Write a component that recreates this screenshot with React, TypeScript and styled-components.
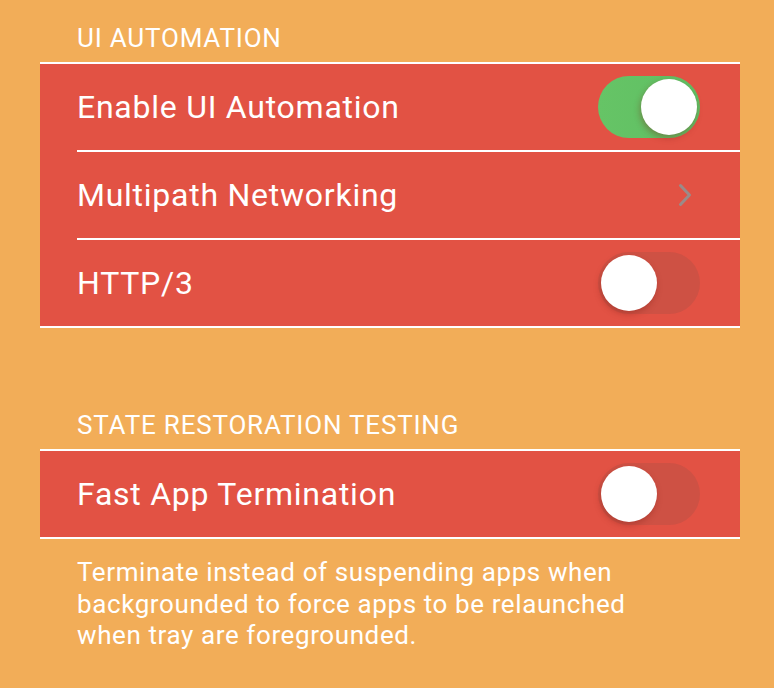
import React from "react";
import styled, { createGlobalStyle } from "styled-components";

const Global = createGlobalStyle`
  html, body { margin: 0; padding: 0; background: #f2ad58; }
  body { font-family: Roboto, "Liberation Sans", sans-serif; -webkit-font-smoothing: antialiased; }
`;

const Page = styled.div`
  width: 774px;
  height: 688px;
  background: #f2ad58;
  box-sizing: border-box;
  padding: 0 34px 0 40px;
  overflow: hidden;
`;

const SectionHeader = styled.div<{ $top: number }>`
  margin-top: ${(p) => p.$top}px;
  padding: 0 0 10px 37px;
  font-size: 26px;
  line-height: 28px;
  color: #fff;
  letter-spacing: 0.8px;
`;

const Group = styled.div`
  background: #e25244;
  border-top: 2px solid #fff;
  border-bottom: 2px solid #fff;
`;

const Row = styled.div`
  padding-left: 37px;
`;

const RowInner = styled.div<{ $last: boolean }>`
  height: 86px;
  display: flex;
  align-items: center;
  justify-content: space-between;
  padding-right: 40px;
  border-bottom: ${(p) => (p.$last ? "none" : "2px solid #fff")};
`;

const Label = styled.span`
  font-size: 32px;
  color: #fff;
  letter-spacing: 0.75px;
`;

const Track = styled.div<{ $on: boolean }>`
  position: relative;
  width: 102px;
  height: 62px;
  border-radius: 31px;
  background: ${(p) => (p.$on ? "linear-gradient(90deg, #66c466, #5fbf63)" : "rgba(190, 80, 70, 0.55)")};
  flex: none;
`;

const Knob = styled.div<{ $on: boolean }>`
  position: absolute;
  top: 3px;
  left: ${(p) => (p.$on ? "43px" : "3px")};
  width: 56px;
  height: 56px;
  border-radius: 50%;
  background: #fff;
  box-shadow: -1px 3px 6px rgba(120, 30, 20, 0.35);
`;

const Chevron = styled.svg`
  width: 14px;
  height: 24px;
  margin-right: 8px;
  flex: none;
`;

const Footer = styled.div`
  margin-top: 18px;
  padding-left: 37px;
  font-size: 26px;
  line-height: 31.5px;
  color: #fff;
  letter-spacing: 0.6px;
  max-width: 590px;
`;

const Toggle = ({ on }: { on: boolean }) => (
  <Track $on={on}>
    <Knob $on={on} />
  </Track>
);

type Item = { label: string; kind: "on" | "off" | "nav" };

const Section = ({ items }: { items: Item[] }) => (
  <Group>
    {items.map((it, i) => (
      <Row key={it.label}>
        <RowInner $last={i === items.length - 1}>
          <Label>{it.label}</Label>
          {it.kind === "nav" ? (
            <Chevron viewBox="0 0 14 24">
              <path d="M2.5 2.5 L11.5 12 L2.5 21.5" fill="none" stroke="#9a8b89" strokeWidth="3" strokeLinecap="round" strokeLinejoin="round" />
            </Chevron>
          ) : (
            <Toggle on={it.kind === "on"} />
          )}
        </RowInner>
      </Row>
    ))}
  </Group>
);

export default function App() {
  return (
    <>
      <Global />
      <Page>
        <SectionHeader $top={24}>UI AUTOMATION</SectionHeader>
        <Section
          items={[
            { label: "Enable UI Automation", kind: "on" },
            { label: "Multipath Networking", kind: "nav" },
            { label: "HTTP/3", kind: "off" },
          ]}
        />
        <SectionHeader $top={83}>STATE RESTORATION TESTING</SectionHeader>
        <Section items={[{ label: "Fast App Termination", kind: "off" }]} />
        <Footer>
          Terminate instead of suspending apps when backgrounded to force apps to be relaunched when tray are foregrounded.
        </Footer>
      </Page>
    </>
  );
}
